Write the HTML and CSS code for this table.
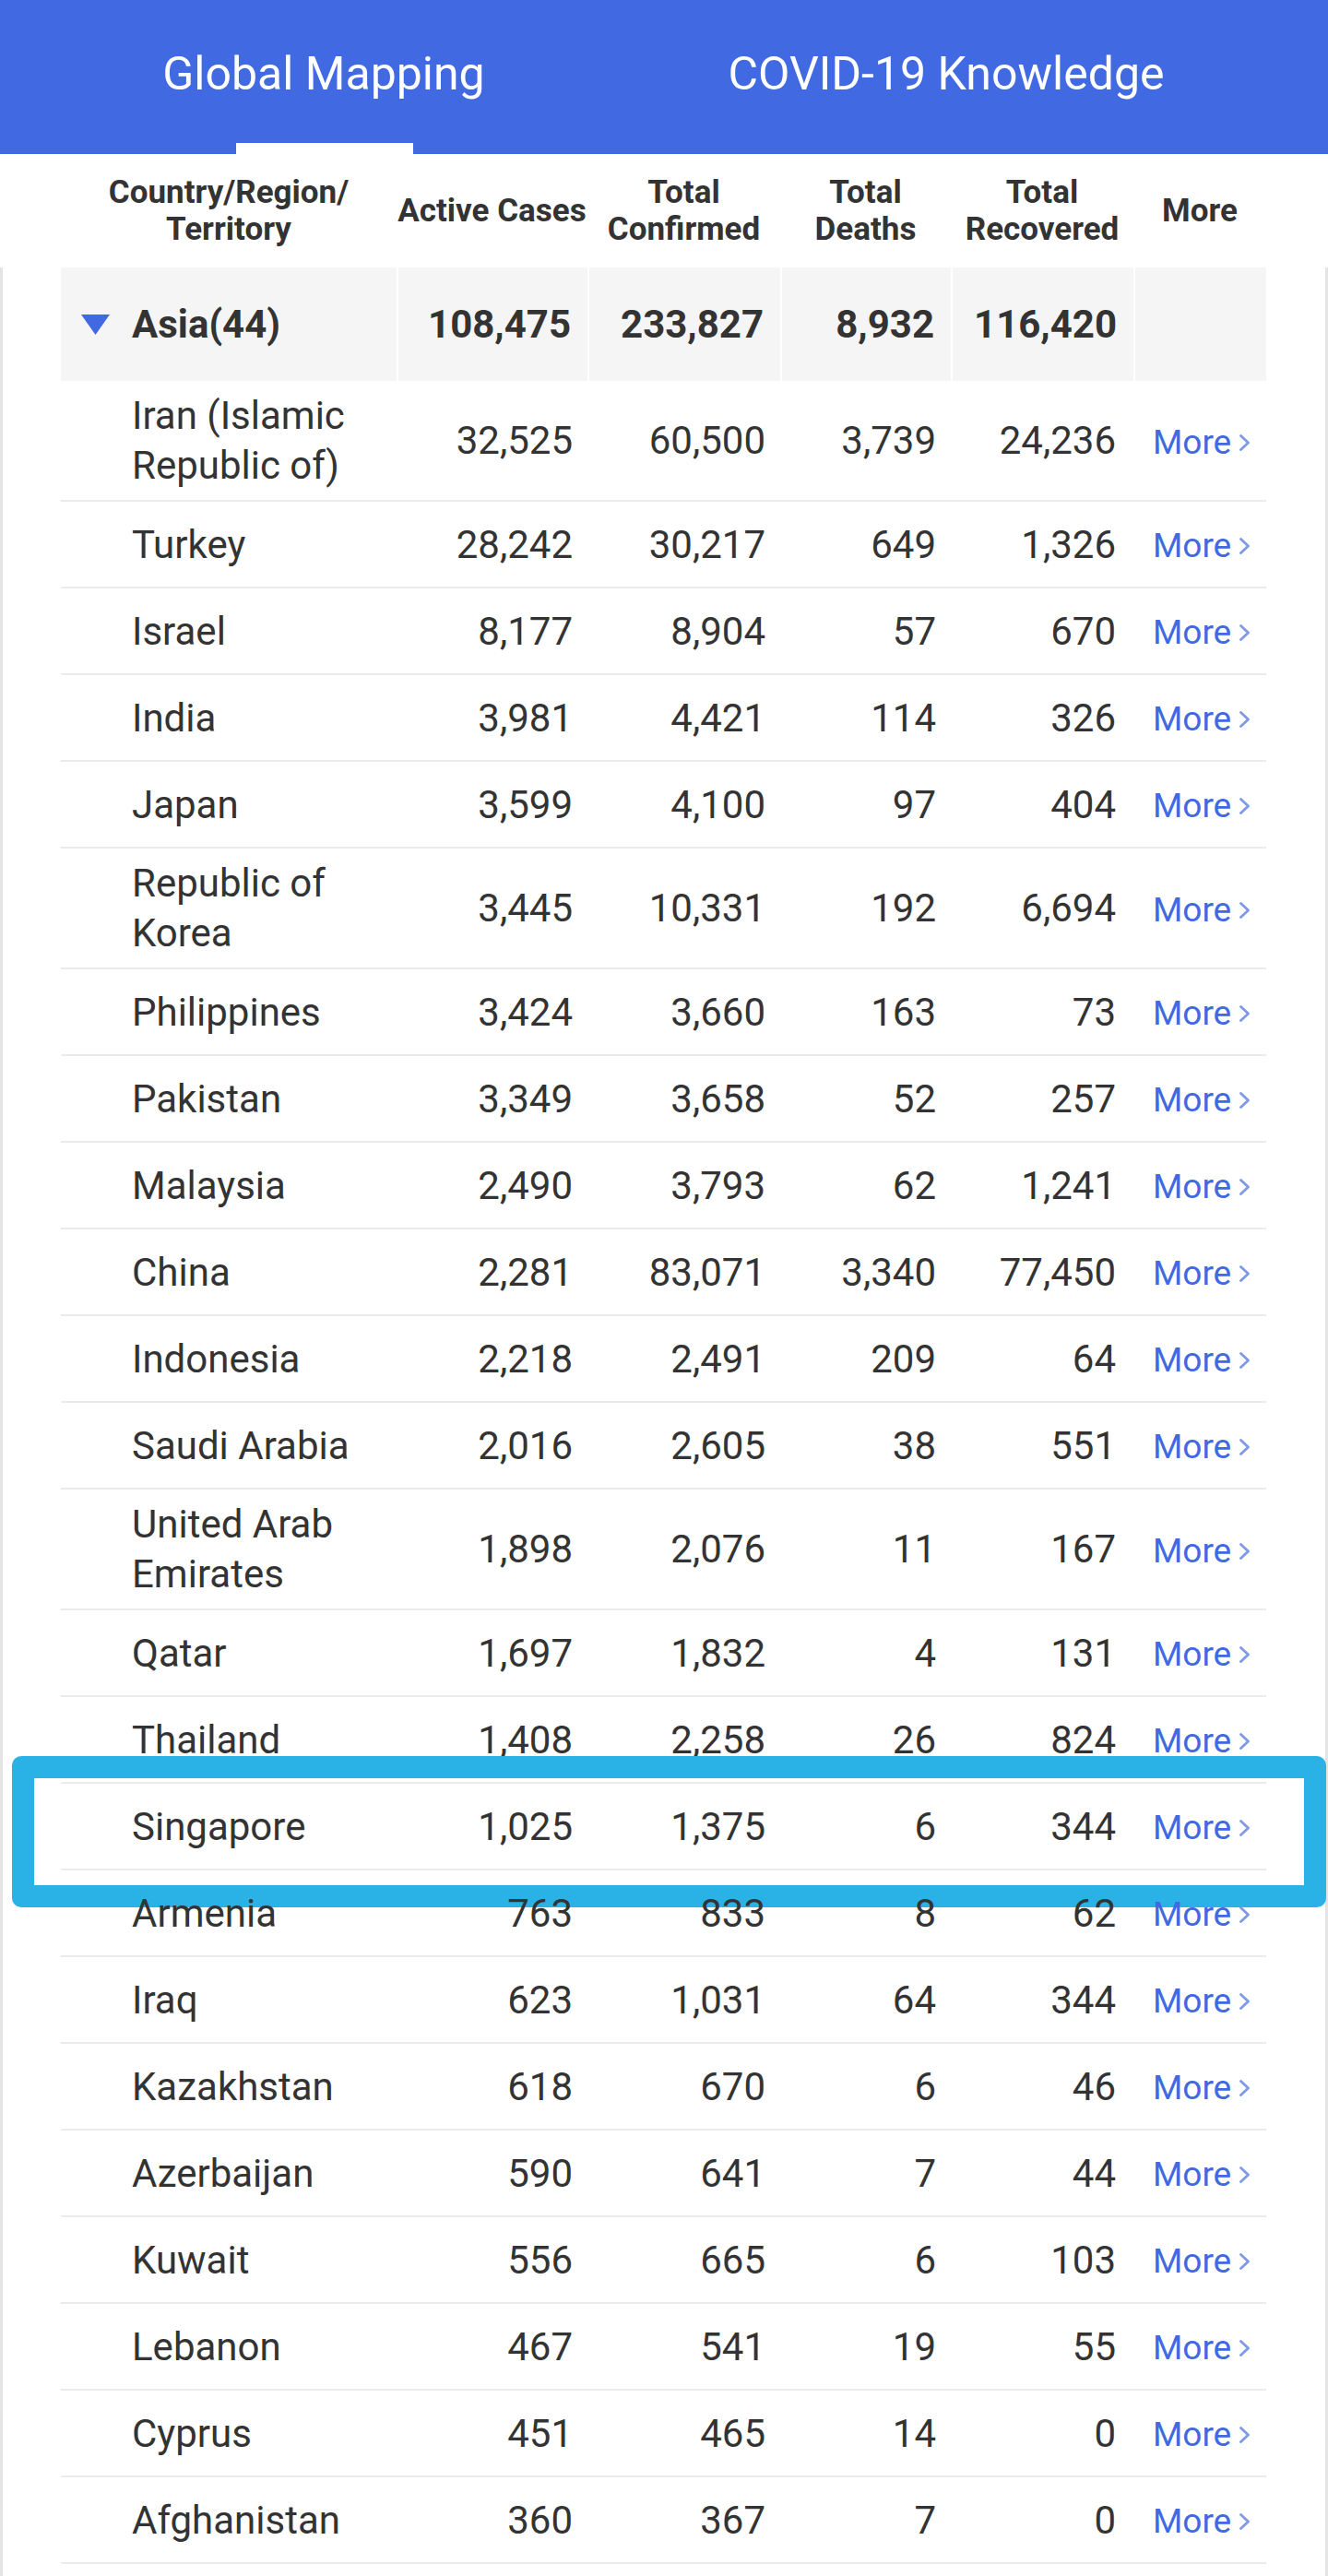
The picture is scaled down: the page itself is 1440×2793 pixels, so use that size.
FILE: index.html
```html
<!DOCTYPE html>
<html lang="en">
<head>
<meta charset="utf-8">
<title>Global Mapping</title>
<link rel="stylesheet" href="styles.css">
</head>
<body>
<header class="tabs">
  <div class="tab tab-global">Global Mapping<span class="indicator"></span></div>
  <div class="tab tab-knowledge">COVID-19 Knowledge</div>
</header>

<div class="colhead">
  <div>Country/Region/<br>Territory</div>
  <div>Active Cases</div>
  <div>Total<br>Confirmed</div>
  <div>Total<br>Deaths</div>
  <div>Total<br>Recovered</div>
  <div>More</div>
</div>

<div class="list">
  <div class="region">
    <div class="rname"><svg class="tri" width="31" height="22" viewBox="0 0 31 22"><polygon points="0,0 31,0 15.5,22" fill="#4169e1"/></svg>Asia(44)</div>
    <div class="num">108,475</div>
    <div class="num">233,827</div>
    <div class="num">8,932</div>
    <div class="num">116,420</div>
    <div></div>
  </div>

  <div class="row"><div class="name">Iran (Islamic Republic of)</div><div class="num">32,525</div><div class="num">60,500</div><div class="num">3,739</div><div class="num">24,236</div><a class="more">More<svg width="13" height="18" viewBox="0 0 13 18"><polyline points="2.5,1.5 10.5,9 2.5,16.5"/></svg></a></div>
  <div class="row"><div class="name">Turkey</div><div class="num">28,242</div><div class="num">30,217</div><div class="num">649</div><div class="num">1,326</div><a class="more">More<svg width="13" height="18" viewBox="0 0 13 18"><polyline points="2.5,1.5 10.5,9 2.5,16.5"/></svg></a></div>
  <div class="row"><div class="name">Israel</div><div class="num">8,177</div><div class="num">8,904</div><div class="num">57</div><div class="num">670</div><a class="more">More<svg width="13" height="18" viewBox="0 0 13 18"><polyline points="2.5,1.5 10.5,9 2.5,16.5"/></svg></a></div>
  <div class="row"><div class="name">India</div><div class="num">3,981</div><div class="num">4,421</div><div class="num">114</div><div class="num">326</div><a class="more">More<svg width="13" height="18" viewBox="0 0 13 18"><polyline points="2.5,1.5 10.5,9 2.5,16.5"/></svg></a></div>
  <div class="row"><div class="name">Japan</div><div class="num">3,599</div><div class="num">4,100</div><div class="num">97</div><div class="num">404</div><a class="more">More<svg width="13" height="18" viewBox="0 0 13 18"><polyline points="2.5,1.5 10.5,9 2.5,16.5"/></svg></a></div>
  <div class="row"><div class="name">Republic of Korea</div><div class="num">3,445</div><div class="num">10,331</div><div class="num">192</div><div class="num">6,694</div><a class="more">More<svg width="13" height="18" viewBox="0 0 13 18"><polyline points="2.5,1.5 10.5,9 2.5,16.5"/></svg></a></div>
  <div class="row"><div class="name">Philippines</div><div class="num">3,424</div><div class="num">3,660</div><div class="num">163</div><div class="num">73</div><a class="more">More<svg width="13" height="18" viewBox="0 0 13 18"><polyline points="2.5,1.5 10.5,9 2.5,16.5"/></svg></a></div>
  <div class="row"><div class="name">Pakistan</div><div class="num">3,349</div><div class="num">3,658</div><div class="num">52</div><div class="num">257</div><a class="more">More<svg width="13" height="18" viewBox="0 0 13 18"><polyline points="2.5,1.5 10.5,9 2.5,16.5"/></svg></a></div>
  <div class="row"><div class="name">Malaysia</div><div class="num">2,490</div><div class="num">3,793</div><div class="num">62</div><div class="num">1,241</div><a class="more">More<svg width="13" height="18" viewBox="0 0 13 18"><polyline points="2.5,1.5 10.5,9 2.5,16.5"/></svg></a></div>
  <div class="row"><div class="name">China</div><div class="num">2,281</div><div class="num">83,071</div><div class="num">3,340</div><div class="num">77,450</div><a class="more">More<svg width="13" height="18" viewBox="0 0 13 18"><polyline points="2.5,1.5 10.5,9 2.5,16.5"/></svg></a></div>
  <div class="row"><div class="name">Indonesia</div><div class="num">2,218</div><div class="num">2,491</div><div class="num">209</div><div class="num">64</div><a class="more">More<svg width="13" height="18" viewBox="0 0 13 18"><polyline points="2.5,1.5 10.5,9 2.5,16.5"/></svg></a></div>
  <div class="row"><div class="name">Saudi Arabia</div><div class="num">2,016</div><div class="num">2,605</div><div class="num">38</div><div class="num">551</div><a class="more">More<svg width="13" height="18" viewBox="0 0 13 18"><polyline points="2.5,1.5 10.5,9 2.5,16.5"/></svg></a></div>
  <div class="row"><div class="name">United Arab Emirates</div><div class="num">1,898</div><div class="num">2,076</div><div class="num">11</div><div class="num">167</div><a class="more">More<svg width="13" height="18" viewBox="0 0 13 18"><polyline points="2.5,1.5 10.5,9 2.5,16.5"/></svg></a></div>
  <div class="row"><div class="name">Qatar</div><div class="num">1,697</div><div class="num">1,832</div><div class="num">4</div><div class="num">131</div><a class="more">More<svg width="13" height="18" viewBox="0 0 13 18"><polyline points="2.5,1.5 10.5,9 2.5,16.5"/></svg></a></div>
  <div class="row"><div class="name">Thailand</div><div class="num">1,408</div><div class="num">2,258</div><div class="num">26</div><div class="num">824</div><a class="more">More<svg width="13" height="18" viewBox="0 0 13 18"><polyline points="2.5,1.5 10.5,9 2.5,16.5"/></svg></a></div>
  <div class="row row-marked"><div class="name">Singapore</div><div class="num">1,025</div><div class="num">1,375</div><div class="num">6</div><div class="num">344</div><a class="more">More<svg width="13" height="18" viewBox="0 0 13 18"><polyline points="2.5,1.5 10.5,9 2.5,16.5"/></svg></a><span class="highlight"></span></div>
  <div class="row"><div class="name">Armenia</div><div class="num">763</div><div class="num">833</div><div class="num">8</div><div class="num">62</div><a class="more">More<svg width="13" height="18" viewBox="0 0 13 18"><polyline points="2.5,1.5 10.5,9 2.5,16.5"/></svg></a></div>
  <div class="row"><div class="name">Iraq</div><div class="num">623</div><div class="num">1,031</div><div class="num">64</div><div class="num">344</div><a class="more">More<svg width="13" height="18" viewBox="0 0 13 18"><polyline points="2.5,1.5 10.5,9 2.5,16.5"/></svg></a></div>
  <div class="row"><div class="name">Kazakhstan</div><div class="num">618</div><div class="num">670</div><div class="num">6</div><div class="num">46</div><a class="more">More<svg width="13" height="18" viewBox="0 0 13 18"><polyline points="2.5,1.5 10.5,9 2.5,16.5"/></svg></a></div>
  <div class="row"><div class="name">Azerbaijan</div><div class="num">590</div><div class="num">641</div><div class="num">7</div><div class="num">44</div><a class="more">More<svg width="13" height="18" viewBox="0 0 13 18"><polyline points="2.5,1.5 10.5,9 2.5,16.5"/></svg></a></div>
  <div class="row"><div class="name">Kuwait</div><div class="num">556</div><div class="num">665</div><div class="num">6</div><div class="num">103</div><a class="more">More<svg width="13" height="18" viewBox="0 0 13 18"><polyline points="2.5,1.5 10.5,9 2.5,16.5"/></svg></a></div>
  <div class="row"><div class="name">Lebanon</div><div class="num">467</div><div class="num">541</div><div class="num">19</div><div class="num">55</div><a class="more">More<svg width="13" height="18" viewBox="0 0 13 18"><polyline points="2.5,1.5 10.5,9 2.5,16.5"/></svg></a></div>
  <div class="row"><div class="name">Cyprus</div><div class="num">451</div><div class="num">465</div><div class="num">14</div><div class="num">0</div><a class="more">More<svg width="13" height="18" viewBox="0 0 13 18"><polyline points="2.5,1.5 10.5,9 2.5,16.5"/></svg></a></div>
  <div class="row"><div class="name">Afghanistan</div><div class="num">360</div><div class="num">367</div><div class="num">7</div><div class="num">0</div><a class="more">More<svg width="13" height="18" viewBox="0 0 13 18"><polyline points="2.5,1.5 10.5,9 2.5,16.5"/></svg></a></div>
</div>
</body>
</html>
```

FILE: styles.css
```css
html, body {
  margin: 0;
  padding: 0;
  background: #ffffff;
}

body {
  font-family: Roboto, "Noto Sans", "Liberation Sans", sans-serif;
  color: #333333;
}

/* ---------- top tab bar ---------- */
.tabs {
  display: flex;
  height: 167px;
  background: #4169e1;
  color: #ffffff;
  font-size: 50px;
}

.tab {
  position: relative;
  display: flex;
  align-items: center;
  justify-content: center;
  box-sizing: border-box;
  padding-bottom: 8px;
  white-space: nowrap;
}

.tab-global { width: 702px; }
.tab-knowledge { width: 648px; }

.indicator {
  position: absolute;
  left: 50%;
  bottom: 0;
  width: 192px;
  height: 12px;
  margin-left: -95px;
  background: #ffffff;
}

/* ---------- shared column grid ---------- */
.colhead,
.region,
.row {
  display: grid;
  grid-template-columns: 364px 207px 209px 185px 198px 144px;
}

/* ---------- column headings ---------- */
.colhead {
  margin-left: 66px;
  width: 1307px;
  height: 123px;
  align-items: center;
  text-align: center;
  font-size: 35px;
  font-weight: 700;
  line-height: 40px;
  color: #333333;
}

/* ---------- list body ---------- */
.list {
  border-left: 3px solid #e4e4e4;
  border-right: 3px solid #e4e4e4;
  padding: 0 64px 60px 63px;
}

.region {
  height: 123px;
  font-size: 42px;
  font-weight: 700;
  line-height: 54px;
}

.region > div {
  display: flex;
  align-items: center;
  justify-content: flex-end;
  background: #f5f5f5;
  border-left: 2px solid #ffffff;
  padding-right: 18px;
}

.region > .rname {
  justify-content: flex-start;
  border-left: 0;
  padding-left: 22px;
  padding-right: 0;
}

.tri {
  display: block;
  margin-right: 24px;
  flex: none;
}

.row {
  position: relative;
  box-sizing: border-box;
  min-height: 94px;
  padding: 11px 0 10px;
  align-items: center;
  border-bottom: 2px solid #ebebeb;
  font-size: 42px;
  line-height: 54px;
}

.name {
  padding-left: 77px;
  padding-right: 4px;
}

.num {
  text-align: right;
  padding-right: 16px;
}

.row .num:nth-child(5) {
  padding-right: 19px;
}

.more {
  display: flex;
  align-items: center;
  padding-left: 21px;
  padding-top: 3px;
  font-size: 37px;
  color: #4169e1;
  text-decoration: none;
}

.more svg {
  margin-left: 8px;
  flex: none;
}

.more polyline {
  fill: none;
  stroke: #7f99e6;
  stroke-width: 2.8;
  stroke-linecap: round;
  stroke-linejoin: round;
}

/* ---------- annotation overlay ---------- */
.highlight {
  position: absolute;
  top: -30px;
  bottom: -42px;
  left: -53px;
  right: -65px;
  border: 24px solid #2ab2e6;
  border-radius: 10px;
  pointer-events: none;
}
```
